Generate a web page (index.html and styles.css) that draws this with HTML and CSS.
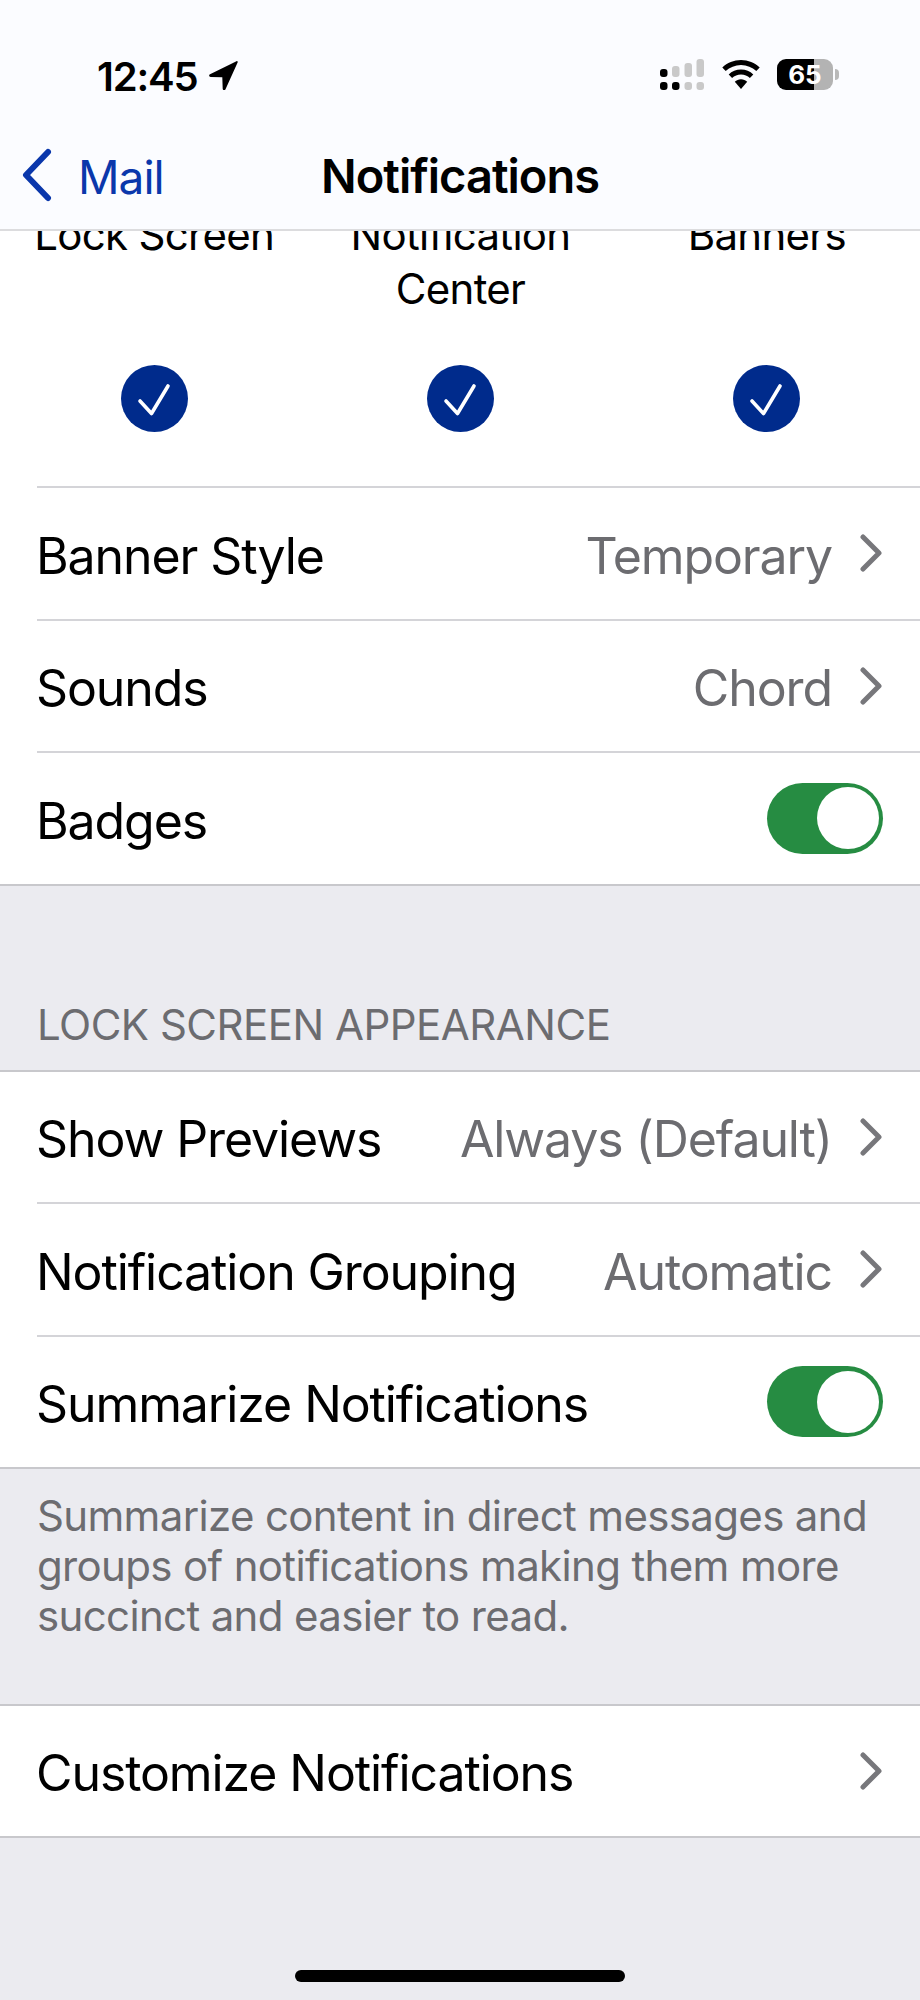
FILE: index.html
```html
<!DOCTYPE html>
<html lang="en">
<head>
<meta charset="utf-8">
<title>Notifications</title>
<link rel="stylesheet" href="styles.css">
</head>
<body>
<div class="phone">
  <header class="top">
    <div class="status">
      <div class="status-left">
        <span class="time">12:45</span>
        <svg class="loc" viewBox="0 0 30 30"><path d="M28.5 1.2 2 14.2c-1.4.8-1 2.7.7 2.8l11.6.2.4 11.6c.1 1.6 2 2 2.7.6L29.6 2.4c.4-.9-.3-1.600-1.100-1.200z"/></svg>
      </div>
      <div class="status-right">
        <svg class="signal" viewBox="0 0 44 31">
          <rect x="0" y="10" width="7.500" height="8" rx="3" fill="#000"/>
          <rect x="12" y="7" width="7.500" height="11" rx="3" fill="#c9c9c9"/>
          <rect x="24.500" y="4" width="7.500" height="14" rx="3" fill="#c9c9c9"/>
          <rect x="36.500" y="0" width="7.500" height="18" rx="3" fill="#c9c9c9"/>
          <rect x="0" y="23" width="7.500" height="8" rx="3" fill="#000"/>
          <rect x="12" y="23" width="7.500" height="8" rx="3" fill="#000"/>
          <rect x="24.500" y="23" width="7.500" height="8" rx="3" fill="#c9c9c9"/>
          <rect x="36.500" y="23" width="7.500" height="8" rx="3" fill="#c9c9c9"/>
        </svg>
        <svg class="wifi" viewBox="0 0 38 29">
          <path d="M19 0C11.700 0 5.300 2.800.3 7.400L3.700 11C7.800 7.200 13.100 4.900 19 4.900S30.200 7.200 34.300 11l3.400-3.600C32.700 2.800 26.300 0 19 0z"/>
          <path d="M19 9.500c-4.800 0-9.100 1.800-12.300 4.900l3.400 3.600c2.300-2.200 5.400-3.600 8.900-3.600s6.600 1.400 8.900 3.600l3.400-3.600C28.100 11.300 23.800 9.500 19 9.500z"/>
          <path d="M19 19.200c-2.400 0-4.600 1-6.200 2.500L19 29l6.200-7.300c-1.600-1.500-3.800-2.500-6.200-2.500z"/>
        </svg>
        <div class="battery">
          <div class="batt-body"><span class="batt-level"></span><span class="batt-rest"></span><span class="batt-num">65</span></div>
          <span class="batt-nub"></span>
        </div>
      </div>
    </div>
    <nav class="navbar">
      <div class="back">
        <svg class="back-icon" viewBox="0 0 32 54"><path d="M27 4 5 27l22 23" fill="none" stroke="#0a37ab" stroke-width="6" stroke-linecap="round" stroke-linejoin="round"/></svg>
        <span class="back-label">Mail</span>
      </div>
      <h1 class="title">Notifications</h1>
    </nav>
  </header>

  <main class="scroll">
    <section class="group group-first">
      <div class="pickers">
        <div class="picker">
          <div class="picker-label">Lock Screen</div>
          <svg class="check" viewBox="0 0 67 67"><circle cx="33.500" cy="33.500" r="33.500" fill="#002b8c"/><path d="M19 36l11.500 12.500L47 21" fill="none" stroke="#fff" stroke-width="3.600" stroke-linecap="round" stroke-linejoin="round"/></svg>
        </div>
        <div class="picker">
          <div class="picker-label">Notification<br>Center</div>
          <svg class="check" viewBox="0 0 67 67"><circle cx="33.500" cy="33.500" r="33.500" fill="#002b8c"/><path d="M19 36l11.500 12.500L47 21" fill="none" stroke="#fff" stroke-width="3.600" stroke-linecap="round" stroke-linejoin="round"/></svg>
        </div>
        <div class="picker">
          <div class="picker-label">Banners</div>
          <svg class="check" viewBox="0 0 67 67"><circle cx="33.500" cy="33.500" r="33.500" fill="#002b8c"/><path d="M19 36l11.500 12.500L47 21" fill="none" stroke="#fff" stroke-width="3.600" stroke-linecap="round" stroke-linejoin="round"/></svg>
        </div>
      </div>
      <div class="row">
        <span class="row-label">Banner Style</span>
        <span class="row-value">Temporary</span>
        <svg class="chev" viewBox="0 0 24 38"><path d="M4 3l16 16L4 35" fill="none" stroke="#77777b" stroke-width="5" stroke-linecap="round" stroke-linejoin="round"/></svg>
      </div>
      <div class="row">
        <span class="row-label">Sounds</span>
        <span class="row-value">Chord</span>
        <svg class="chev" viewBox="0 0 24 38"><path d="M4 3l16 16L4 35" fill="none" stroke="#77777b" stroke-width="5" stroke-linecap="round" stroke-linejoin="round"/></svg>
      </div>
      <div class="row">
        <span class="row-label">Badges</span>
        <span class="toggle"><span class="knob"></span></span>
      </div>
    </section>

    <h2 class="section-head">LOCK SCREEN APPEARANCE</h2>
    <section class="group">
      <div class="row">
        <span class="row-label">Show Previews</span>
        <span class="row-value">Always (Default)</span>
        <svg class="chev" viewBox="0 0 24 38"><path d="M4 3l16 16L4 35" fill="none" stroke="#77777b" stroke-width="5" stroke-linecap="round" stroke-linejoin="round"/></svg>
      </div>
      <div class="row">
        <span class="row-label">Notification Grouping</span>
        <span class="row-value">Automatic</span>
        <svg class="chev" viewBox="0 0 24 38"><path d="M4 3l16 16L4 35" fill="none" stroke="#77777b" stroke-width="5" stroke-linecap="round" stroke-linejoin="round"/></svg>
      </div>
      <div class="row">
        <span class="row-label">Summarize Notifications</span>
        <span class="toggle"><span class="knob"></span></span>
      </div>
    </section>
    <p class="footnote">Summarize content in direct messages and groups of notifications making them more succinct and easier to read.</p>

    <section class="group">
      <div class="row">
        <span class="row-label">Customize Notifications</span>
        <svg class="chev" viewBox="0 0 24 38"><path d="M4 3l16 16L4 35" fill="none" stroke="#77777b" stroke-width="5" stroke-linecap="round" stroke-linejoin="round"/></svg>
      </div>
    </section>
  </main>
  <div class="home-bar"></div>
</div>
</body>
</html>
```
FILE: styles.css
```css
* { box-sizing: border-box; }
html, body { margin: 0; padding: 0; }
body {
  width: 920px;
  height: 2000px;
  overflow: hidden;
  background: #ebebf0;
  font-family: Inter, "Liberation Sans", sans-serif;
  color: #000;
}
.phone {
  position: relative;
  width: 920px;
  height: 2000px;
  display: flex;
  flex-direction: column;
  overflow: hidden;
}
.top {
  height: 231px;
  flex: none;
  background: #fbfcff;
  border-bottom: 2px solid #dcdcde;
  position: relative;
  z-index: 2;
}
.status {
  height: 119px;
  display: flex;
  justify-content: space-between;
  align-items: flex-start;
  padding: 59px 80px 0 97px;
}
.status-left { display: flex; align-items: center; gap: 11px; height: 31px; }
.time { font-size: 40px; font-weight: 600; line-height: 31px; letter-spacing: -1.200px; position: relative; top: 2px; }
.loc { width: 30px; height: 30px; flex: none; }
.status-right { display: flex; align-items: flex-start; margin-right: 1px; }
.signal { width: 44px; height: 31px; margin-right: 18px; }
.wifi { width: 38px; height: 29px; margin-right: 17px; margin-top: 1px; }
.battery { display: flex; align-items: center; gap: 2px; }
.batt-body {
  position: relative;
  width: 56px;
  height: 31px;
  border-radius: 9px;
  overflow: hidden;
  display: flex;
}
.batt-level { width: 37px; background: #000; }
.batt-rest { flex: 1; background: #b3b3b3; }
.batt-num {
  position: absolute;
  inset: 0;
  text-align: center;
  color: #fff;
  font-size: 26px;
  font-weight: 700;
  line-height: 31px;
}
.batt-nub { width: 4px; height: 11px; background: #b9b9b9; border-radius: 0 4px 4px 0; }
.navbar {
  position: relative;
  height: 110px;
  display: flex;
  align-items: center;
  justify-content: center;
}
.back {
  position: absolute;
  left: 21px;
  top: 29px;
  display: flex;
  align-items: center;
  gap: 25px;
  height: 54px;
}
.back-icon { width: 32px; height: 54px; flex: none; }
.back-label { font-size: 46px; color: #0a37ab; letter-spacing: -1px; position: relative; top: 2px; }
.title { margin: 0; font-size: 47px; font-weight: 600; letter-spacing: -1px; position: relative; top: 1px; }

.scroll { flex: 1; min-height: 0; overflow: hidden; }
.group { background: #fff; border-top: 2px solid #c8c8cc; border-bottom: 2px solid #c8c8cc; }
.group-first { border-top: 0; }
.pickers {
  display: grid;
  grid-template-columns: repeat(3, 1fr);
  height: 278px;
  margin-top: -23px;
  padding-left: 1px;
}
.picker { display: flex; flex-direction: column; align-items: center; }
.picker-label { font-size: 42px; line-height: 54px; height: 108px; text-align: center; letter-spacing: -0.700px; }
.check { width: 67px; height: 67px; margin-top: 49px; flex: none; }
.row {
  height: 132.500px;
  margin-left: 37px;
  padding-right: 37px;
  display: flex;
  align-items: center;
  border-top: 2px solid #d4d4d8;
}
.group > .row:first-child { border-top: 0; height: 130.500px; }
.row-label { font-size: 50px; letter-spacing: -1.100px; margin-left: -1px; padding-top: 5px; }
.row-value { margin-left: auto; font-size: 50px; letter-spacing: -1.100px; color: #6c6c70; padding-top: 5px; }
.row-label + .chev, .row-label + .toggle { margin-left: auto; }
.chev { width: 24px; height: 38px; margin-left: 27px; flex: none; }
.toggle {
  width: 116px;
  height: 71px;
  border-radius: 36px;
  background: #268c42;
  display: flex;
  align-items: center;
  justify-content: flex-end;
  padding-right: 4px;
  flex: none;
}
.knob { width: 62px; height: 62px; border-radius: 50%; background: #fff; }
.section-head {
  margin: 0;
  height: 184px;
  padding: 116px 37px 0;
  font-size: 42px;
  line-height: 46px;
  font-weight: 400;
  color: #6c6c70;
  letter-spacing: -0.500px;
}
.footnote {
  margin: 0;
  height: 234.500px;
  padding: 21.500px 37px 0;
  font-size: 42px;
  line-height: 50px;
  color: #6c6c70;
  letter-spacing: -0.650px;
}
.home-bar {
  position: absolute;
  left: 295px;
  top: 1970px;
  width: 330px;
  height: 12px;
  border-radius: 6px;
  background: #000;
}
```
